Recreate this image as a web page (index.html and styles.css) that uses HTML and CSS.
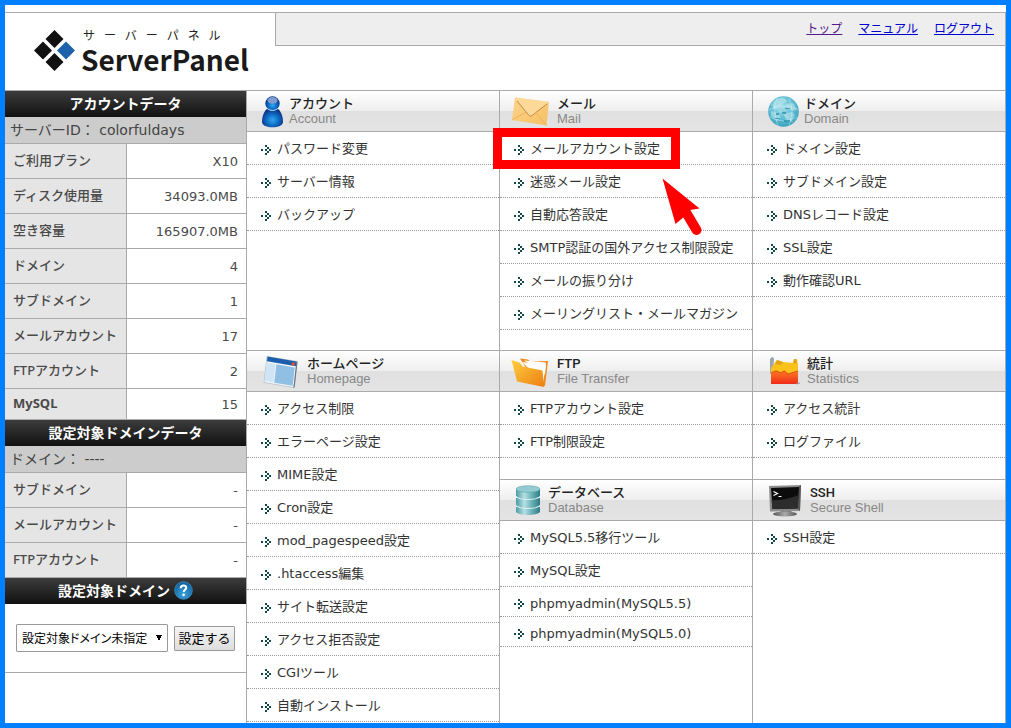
FILE: index.html
```html
<!DOCTYPE html>
<html lang="ja">
<head>
<meta charset="utf-8">
<title>ServerPanel</title>
<link rel="stylesheet" href="styles.css">
</head>
<body>
<svg class="defs" aria-hidden="true">
  <defs>
    <radialGradient id="pawn" cx=".5" cy=".62" r=".55"><stop offset="0" stop-color="#2fa8ee"/><stop offset=".5" stop-color="#0f6fc9"/><stop offset="1" stop-color="#0a3583"/></radialGradient>
    <linearGradient id="mailfill" x1="0" y1="0" x2="1" y2="1"><stop offset="0" stop-color="#fbd48a"/><stop offset="1" stop-color="#f7c065"/></linearGradient>
    <radialGradient id="globe" cx=".45" cy=".35" r=".7"><stop offset="0" stop-color="#a9e0ea"/><stop offset=".6" stop-color="#58b8cf"/><stop offset="1" stop-color="#3a9fba"/></radialGradient>
    <linearGradient id="folder" x1="0" y1="0" x2="1" y2="1"><stop offset="0" stop-color="#fdd03c"/><stop offset="1" stop-color="#ee7d15"/></linearGradient>
    <linearGradient id="redfill" x1="0" y1="0" x2="0" y2="1"><stop offset="0" stop-color="#ff7a22"/><stop offset="1" stop-color="#ee2c1a"/></linearGradient>
    <linearGradient id="disk" x1="0" y1="0" x2="1" y2="0"><stop offset="0" stop-color="#4c9ba3"/><stop offset=".35" stop-color="#b5e0e2"/><stop offset=".65" stop-color="#6bb2b8"/><stop offset="1" stop-color="#2f7c86"/></linearGradient>
    <linearGradient id="metal" x1="0" y1="0" x2="1" y2="0"><stop offset="0" stop-color="#555"/><stop offset=".5" stop-color="#aaa"/><stop offset="1" stop-color="#555"/></linearGradient>
    <radialGradient id="help" cx=".5" cy=".7" r=".6"><stop offset="0" stop-color="#3aa5dc"/><stop offset="1" stop-color="#1467a5"/></radialGradient>
    <symbol id="dot-arrow" viewBox="0 0 10 10"><path fill="#124a4a" d="M0 4h2v2H0zM4 4h2v2H4zM4 0h2v2H4zM6 2h2v2H6zM8 4h2v2H8zM6 6h2v2H6zM4 8h2v2H4z"/></symbol>
  </defs>
</svg>

<header class="header">
  <div class="brand">
    <svg class="brand-mark" width="41" height="41" viewBox="0 0 41 41" aria-hidden="true">
      <path fill="#111" d="M20.500 0l9 9-9 9-9-9zM9 11.500l9 9-9 9-9-9zM20.500 23l9 9-9 9-9-9z"/>
      <path fill="#1e62ab" d="M32 11.500l9 9-9 9-9-9z"/>
    </svg>
    <div class="brand-text">
      <span class="brand-kana">サ&nbsp;&nbsp;&nbsp;ー&nbsp;&nbsp;&nbsp;バ&nbsp;&nbsp;&nbsp;ー&nbsp;&nbsp;&nbsp;パ&nbsp;&nbsp;&nbsp;ネ&nbsp;&nbsp;&nbsp;ル</span>
      <span class="brand-name">ServerPanel</span>
    </div>
  </div>
  <nav class="topnav">
    <a class="visited" href="#top">トップ</a>
    <a href="#manual">マニュアル</a>
    <a href="#logout">ログアウト</a>
  </nav>
</header>

<div class="layout">
  <aside class="sidebar">
    <h2 class="side-head">アカウントデータ</h2>
    <p class="side-sub">サーバーID： colorfuldays</p>
    <table class="data">
      <tr><th scope="row">ご利用プラン</th><td>X10</td></tr>
      <tr><th scope="row">ディスク使用量</th><td>34093.0MB</td></tr>
      <tr><th scope="row">空き容量</th><td>165907.0MB</td></tr>
      <tr><th scope="row">ドメイン</th><td>4</td></tr>
      <tr><th scope="row">サブドメイン</th><td>1</td></tr>
      <tr><th scope="row">メールアカウント</th><td>17</td></tr>
      <tr><th scope="row">FTPアカウント</th><td>2</td></tr>
      <tr class="short"><th scope="row">MySQL</th><td>15</td></tr>
    </table>
    <h2 class="side-head">設定対象ドメインデータ</h2>
    <p class="side-sub">ドメイン： ----</p>
    <table class="data">
      <tr><th scope="row">サブドメイン</th><td>-</td></tr>
      <tr><th scope="row">メールアカウント</th><td>-</td></tr>
      <tr><th scope="row">FTPアカウント</th><td>-</td></tr>
    </table>
    <h2 class="side-head">設定対象ドメイン
      <svg class="help" width="19" height="19" viewBox="0 0 19 19" role="img" aria-label="ヘルプ"><circle cx="9.500" cy="9.500" r="8.800" fill="url(#help)" stroke="#3a93cb" stroke-width=".8"/><path d="M6.700 7.200c0-3.800 5.800-3.500 5.500-.4-.2 1.900-2.500 2-2.500 4.200" fill="none" stroke="#fff" stroke-width="2"/><circle cx="9.600" cy="13.900" r="1.300" fill="#fff"/></svg>
    </h2>
    <form class="domain-form">
      <select aria-label="設定対象ドメイン"><option>設定対象ドメイン未指定</option></select>
      <button type="button">設定する</button>
    </form>
  </aside>

  <main class="panels">
    <section class="panel">
      <div class="panel-head">
        <svg width="26" height="32" viewBox="0 0 26 32" aria-hidden="true"><path d="M9 12C5 15 3 20 3 26c0 7 21 7 21 0 0-6-2-11-6-14z" fill="url(#pawn)"/><circle cx="13.500" cy="7.500" r="7.200" fill="url(#pawn)"/><ellipse cx="13.500" cy="4.400" rx="5" ry="3.300" fill="#7f9bd0"/><path d="M8 12.500q5.500 4 11 0" fill="none" stroke="#bde7ff" stroke-width="1"/></svg>
        <div><h2>アカウント</h2><p>Account</p></div>
      </div>
      <ul>
        <li><svg><use href="#dot-arrow"/></svg><a href="#p">パスワード変更</a></li>
        <li><svg><use href="#dot-arrow"/></svg><a href="#p">サーバー情報</a></li>
        <li><svg><use href="#dot-arrow"/></svg><a href="#p">バックアップ</a></li>
      </ul>
    </section>

    <section class="panel">
      <div class="panel-head">
        <svg width="41" height="32" viewBox="0 0 41 32" aria-hidden="true"><path d="M3 1.500l34 4.500-2.500 23.500L0 24z" fill="url(#mailfill)"/><path d="M3 1.500L17 19.500q1.500 1.500 3 0L37 6" fill="#fcd998"/><path d="M5 5l12 14.500q1.500 1.500 3 0L35 8" fill="none" stroke="#b98545" stroke-width=".9"/><path d="M0 24l14-8M34.500 29.500L24 16.500" stroke="#eab562" stroke-width="1" fill="none"/></svg>
        <div><h2>メール</h2><p>Mail</p></div>
      </div>
      <ul>
        <li class="marked"><svg><use href="#dot-arrow"/></svg><a href="#p">メールアカウント設定</a>
          <span class="mark-box"></span>
          <svg class="mark-arrow" width="44" height="62" viewBox="0 0 44 62" aria-hidden="true"><path d="M2.500 2.500L39.500 32.500 30 34 25 40 15.500 48z" fill="#f00"/><path d="M24 33L36.500 54" stroke="#f00" stroke-width="10" stroke-linecap="round"/></svg>
        </li>
        <li><svg><use href="#dot-arrow"/></svg><a href="#p">迷惑メール設定</a></li>
        <li><svg><use href="#dot-arrow"/></svg><a href="#p">自動応答設定</a></li>
        <li><svg><use href="#dot-arrow"/></svg><a href="#p">SMTP認証の国外アクセス制限設定</a></li>
        <li><svg><use href="#dot-arrow"/></svg><a href="#p">メールの振り分け</a></li>
        <li><svg><use href="#dot-arrow"/></svg><a href="#p">メーリングリスト・メールマガジン</a></li>
      </ul>
    </section>

    <section class="panel">
      <div class="panel-head">
        <svg width="35" height="32" viewBox="0 0 35 32" aria-hidden="true"><circle cx="18.500" cy="15.500" r="15.300" fill="url(#globe)"/><path d="M8 6q6-5 11-4l3 3-5 3-3 4-6 1zM21 8l7-1 4 6-4 2-5-2zM6 15l7 2 3 5-4 3-6-5zM19 18l8-2 3 3-4 7-5-1z" fill="#c9edf2" opacity=".5"/><path d="M4 14q14-8 29 0M5 21q14 8 27 0M12 2q-5 13 1 28M24 2q6 13 0 27M6 8l22 18" fill="none" stroke="#e0f6f8" stroke-width=".4"/><path d="M11 17h3v2h-3zM17 16h4v2h-4zM10 22h5v1h-5zM20 12h5v1h-5zM19 24h6v2h-6z" fill="#2588ab" opacity=".7"/></svg>
        <div><h2>ドメイン</h2><p>Domain</p></div>
      </div>
      <ul>
        <li><svg><use href="#dot-arrow"/></svg><a href="#p">ドメイン設定</a></li>
        <li><svg><use href="#dot-arrow"/></svg><a href="#p">サブドメイン設定</a></li>
        <li><svg><use href="#dot-arrow"/></svg><a href="#p">DNSレコード設定</a></li>
        <li><svg><use href="#dot-arrow"/></svg><a href="#p">SSL設定</a></li>
        <li><svg><use href="#dot-arrow"/></svg><a href="#p">動作確認URL</a></li>
      </ul>
    </section>

    <section class="panel tall">
      <div class="panel-head">
        <svg width="44" height="32" viewBox="0 0 44 32" aria-hidden="true"><path d="M8 .5l30 5-3 26-30-5z" fill="#f4f8fb" stroke="#b5bfc8" stroke-width=".8"/><path d="M38 5.500l-3 26" stroke="#65727e" stroke-width="1.200"/><path d="M8.500.500l29 5-.6 4.800-29-5z" fill="#1d5fac"/><path d="M33 6.200l3 .5-.4 3-3-.5z" fill="#e8502a"/><path d="M7.600 6.500l9 1.500-2.200 18.500-8.800-1.500z" fill="#cfe5f6"/><path d="M17.400 8.200l18.400 3.200-2.200 18.300-18.400-3z" fill="#8fbfe3"/></svg>
        <div><h2>ホームページ</h2><p>Homepage</p></div>
      </div>
      <ul>
        <li><svg><use href="#dot-arrow"/></svg><a href="#p">アクセス制限</a></li>
        <li><svg><use href="#dot-arrow"/></svg><a href="#p">エラーページ設定</a></li>
        <li><svg><use href="#dot-arrow"/></svg><a href="#p">MIME設定</a></li>
        <li><svg><use href="#dot-arrow"/></svg><a href="#p">Cron設定</a></li>
        <li><svg><use href="#dot-arrow"/></svg><a href="#p">mod_pagespeed設定</a></li>
        <li><svg><use href="#dot-arrow"/></svg><a href="#p">.htaccess編集</a></li>
        <li><svg><use href="#dot-arrow"/></svg><a href="#p">サイト転送設定</a></li>
        <li><svg><use href="#dot-arrow"/></svg><a href="#p">アクセス拒否設定</a></li>
        <li><svg><use href="#dot-arrow"/></svg><a href="#p">CGIツール</a></li>
        <li><svg><use href="#dot-arrow"/></svg><a href="#p">自動インストール</a></li>
      </ul>
    </section>

    <section class="panel">
      <div class="panel-head">
        <svg width="41" height="32" viewBox="0 0 41 32" aria-hidden="true"><path d="M8 2.500l8 1 2 2 18-.5-3 25-8-1z" fill="#f08a1c"/><path d="M10 6l24 3-3 18z" fill="#fffdf6"/><path d="M12 4.500l22 2-1 12z" fill="#fff"/><path d="M-.5 4l8 2.500 3 4 20 4L32 31 5 25.500z" fill="url(#folder)"/></svg>
        <div><h2>FTP</h2><p>File Transfer</p></div>
      </div>
      <ul>
        <li><svg><use href="#dot-arrow"/></svg><a href="#p">FTPアカウント設定</a></li>
        <li><svg><use href="#dot-arrow"/></svg><a href="#p">FTP制限設定</a></li>
      </ul>
    </section>

    <section class="panel">
      <div class="panel-head">
        <svg width="38" height="32" viewBox="0 0 38 32" aria-hidden="true"><path d="M5 3q3-4 4 0l-1 13-3 2z" fill="#9ba6ae"/><path d="M6 12l6-8 6 2 10 1 1-4 3 .5 1 5v9L6 21z" fill="#f9c21d"/><path d="M12 4l6 2-2 3-6-1zM29 3l3 .5-.5 4-3.500-.5z" fill="#e3a418"/><path d="M6 17l5-2 5 2 3-2 4 3 10-3v13L6 28z" fill="url(#redfill)"/><path d="M6 17l5-2 5 2 3-2 4 3 10-3" fill="none" stroke="#e05a10" stroke-width="1.200"/><path d="M31 28l4-1" stroke="#999" stroke-width="1"/></svg>
        <div><h2>統計</h2><p>Statistics</p></div>
      </div>
      <ul>
        <li><svg><use href="#dot-arrow"/></svg><a href="#p">アクセス統計</a></li>
        <li><svg><use href="#dot-arrow"/></svg><a href="#p">ログファイル</a></li>
      </ul>
    </section>

    <section class="panel">
      <div class="panel-head">
        <svg width="32" height="32" viewBox="0 0 32 32" aria-hidden="true"><path d="M4 22v5c3 4 21 4 24 0v-5z" fill="url(#disk)"/><path d="M4 13v7c3 4 21 4 24 0v-7z" fill="url(#disk)"/><path d="M4 4v7c3 4 21 4 24 0V4z" fill="url(#disk)"/><path d="M4 11.500c3 4 21 4 24 0M4 20.500c3 4 21 4 24 0" fill="none" stroke="#d9f0f1" stroke-width="1"/><ellipse cx="16" cy="4" rx="12" ry="3.300" fill="#93ccd0" stroke="#5fa6ad" stroke-width=".6"/></svg>
        <div><h2>データベース</h2><p>Database</p></div>
      </div>
      <ul>
        <li><svg><use href="#dot-arrow"/></svg><a href="#p">MySQL5.5移行ツール</a></li>
        <li><svg><use href="#dot-arrow"/></svg><a href="#p">MySQL設定</a></li>
        <li class="latin"><svg><use href="#dot-arrow"/></svg><a href="#p">phpmyadmin(MySQL5.5)</a></li>
        <li class="latin"><svg><use href="#dot-arrow"/></svg><a href="#p">phpmyadmin(MySQL5.0)</a></li>
      </ul>
    </section>

    <section class="panel">
      <div class="panel-head">
        <svg width="41" height="32" viewBox="0 0 41 32" aria-hidden="true"><path d="M16 24h10l1 5H15z" fill="#777"/><ellipse cx="20" cy="29" rx="12" ry="2.500" fill="url(#metal)"/><path d="M4 1l32-1-1 26-30 .5z" fill="#8c8c8c"/><path d="M36 0l-1 26-2-2V2z" fill="#555"/><path d="M6 3l28-1-1.500 21.500-25 .5z" fill="#0c0c0c"/><path d="M6.500 15q13 1 27-5l-.6 13.500-25.400.5z" fill="#2d2d2d"/><path d="M8.500 6.500l4 2-4 2M13.500 11.500h3" fill="none" stroke="#fff" stroke-width="1.200"/></svg>
        <div><h2>SSH</h2><p>Secure Shell</p></div>
      </div>
      <ul>
        <li><svg><use href="#dot-arrow"/></svg><a href="#p">SSH設定</a></li>
      </ul>
    </section>
  </main>
</div>
</body>
</html>
```
FILE: styles.css
```css
* { box-sizing: border-box; }

body {
  margin: 0;
  min-height: 100vh;
  padding-top: 7px;
  border: 5px solid #0080ff;
  display: flex;
  flex-direction: column;
  background: #fff;
  color: #333;
  font: 13px/20px "DejaVu Sans", "Noto Sans CJK JP", sans-serif;
}

h2, p, ul { margin: 0; padding: 0; }
.defs { position: absolute; width: 0; height: 0; }

/* header */
.header {
  display: flex;
  align-items: flex-start;
  border-top: 1px solid #aaa;
  border-right: 1px solid #aaa;
}
.brand {
  flex: 0 0 270px;
  display: flex;
  gap: 6px;
  padding: 17px 0 13px 29px;
}
.brand-text { display: flex; flex-direction: column; }
.brand-kana {
  padding-left: 2px;
  font: 12px/12px Roboto, "Noto Sans CJK JP", sans-serif;
  color: #222;
}
.brand-name {
  font: bold 28px/35px "Noto Sans CJK JP", sans-serif;
  color: #1a1a1a;
}
.topnav {
  flex: 1;
  display: flex;
  justify-content: flex-end;
  gap: 16px;
  padding: 6px 11px;
  border-left: 1px solid #aaa;
  border-bottom: 1px solid #aaa;
  background: #eee;
  font-size: 12px;
}
.topnav a { color: #00c; }
.topnav .visited { color: #551a8b; }

.layout { flex: 1; display: flex; }

/* sidebar */
.sidebar {
  flex: 0 0 242px;
  border-top: 1px solid #aaa;
  border-right: 1px solid #aaa;
}
.side-head {
  display: flex;
  justify-content: center;
  align-items: center;
  gap: 4px;
  height: 26px;
  padding-bottom: 2px;
  background: linear-gradient(#3c3c3c, #111);
  color: #fff;
  font: bold 14px/24px "Noto Sans CJK JP", sans-serif;
}
.side-sub {
  padding: 3px 5px;
  border-bottom: 1px solid #aaa;
  background: #ccc;
  font-size: 14px;
  line-height: 20px;
  color: #444;
}
.data {
  width: 100%;
  border-collapse: separate;
  border-spacing: 0;
}
.data th, .data td {
  height: 35px;
  padding: 0 8px;
  border-bottom: 1px solid #aaa;
  color: #4a4a4a;
}
.data th {
  width: 122px;
  border-right: 1px solid #aaa;
  background: #e5e5e5;
  text-align: left;
  white-space: nowrap;
  font-family: "Noto Sans", "Noto Sans CJK JP", sans-serif;
  font-weight: 500;
  padding-bottom: 2px;
}
.data td { padding-top: 1px; text-align: right; }
.data .short th, .data .short td { height: 31px; }
.data .short th { font-weight: 700; }

.domain-form {
  display: flex;
  align-items: center;
  gap: 6px;
  padding: 20px 11px;
  border-bottom: 1px solid #aaa;
}
.domain-form select, .domain-form button {
  font: 12px "Noto Sans CJK JP", sans-serif;
  color: #000;
}
.domain-form select {
  appearance: none;
  width: 152px;
  height: 28px;
  padding: 0 5px 2px;
  border: 1px solid #999;
  border-radius: 1px;
  background: conic-gradient(from -27deg at 50% 100%, #000 54deg, transparent 0) 139px 10px / 6px 6px no-repeat #fff;
  font-feature-settings: "palt";
}
.domain-form button {
  width: 61px;
  height: 25px;
  padding: 0 0 2px;
  border: 1px solid #999;
  border-radius: 1px;
  background: linear-gradient(#f6f6f6, #ddd);
  font-size: 13px;
}

/* panels */
.panels {
  flex: 1;
  display: grid;
  grid-template-columns: repeat(3, 1fr);
  grid-template-rows: auto auto 1fr;
}
.panel {
  min-width: 0;
  padding-bottom: 20px;
  border-top: 1px solid #aaa;
  border-right: 1px solid #aaa;
}
.panel:nth-child(n+5) { padding-bottom: 21px; }
.tall { grid-row: span 2; padding-bottom: 0; }

.panel-head {
  display: flex;
  gap: 4px;
  height: 41px;
  padding: 5px 12px 0;
  border-bottom: 1px solid #aaa;
  background: linear-gradient(#fff, #eee 50%, #e0e0e0 51%, #e4e4e4);
}
.panel-head svg { flex: none; overflow: visible; }
.panel-head h2 {
  padding-top: 1px;
  font: 500 13px/14px Roboto, "Noto Sans CJK JP", sans-serif;
  color: #222;
}
.panel-head p {
  font: 13px/16px "Liberation Sans", sans-serif;
  color: #888;
}

.panel ul { list-style: none; }
.panel li {
  display: flex;
  align-items: center;
  gap: 6px;
  height: 33px;
  padding: 2px 0 0 14px;
  border-bottom: 1px dotted #999;
  white-space: nowrap;
}
.panel li > svg:first-child {
  flex: none;
  width: 10px;
  height: 10px;
  margin-top: 2px;
}
.panel li.latin { height: 30px; padding-top: 4px; }
.panel li.latin > svg:first-child { margin-top: 0; }
.panel li a { color: #333; text-decoration: none; }

/* highlight on the mail account entry */
.marked { position: relative; }
.mark-box {
  position: absolute;
  left: -7px;
  top: -4px;
  width: 187px;
  height: 41px;
  border: 9px solid #f00;
  pointer-events: none;
}
.mark-arrow {
  position: absolute;
  left: 160px;
  top: 44px;
  z-index: 1;
  pointer-events: none;
}
```
